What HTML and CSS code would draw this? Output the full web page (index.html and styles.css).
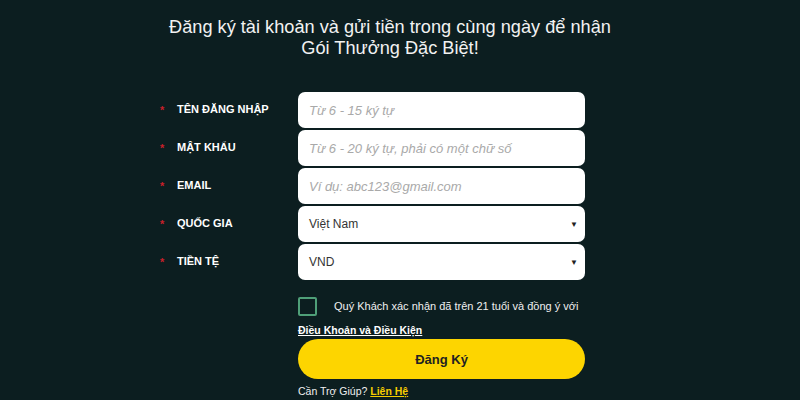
FILE: index.html
```html
<!DOCTYPE html>
<html lang="vi">
<head>
<meta charset="utf-8">
<link rel="stylesheet" href="styles.css">
</head>
<body>
<div class="page">
  <h1 class="title">Đăng ký tài khoản và gửi tiền trong cùng ngày để nhận<br>Gói Thưởng Đặc Biệt!</h1>
  <form class="form">
    <div class="row">
      <label class="label"><span class="star">*</span>TÊN ĐĂNG NHẬP</label>
      <div class="field"><span class="ph">Từ 6 - 15 ký tự</span></div>
    </div>
    <div class="row">
      <label class="label"><span class="star">*</span>MẬT KHẨU</label>
      <div class="field"><span class="ph">Từ 6 - 20 ký tự, phải có một chữ số</span></div>
    </div>
    <div class="row">
      <label class="label"><span class="star">*</span>EMAIL</label>
      <div class="field"><span class="ph">Ví dụ: abc123@gmail.com</span></div>
    </div>
    <div class="row">
      <label class="label"><span class="star">*</span>QUỐC GIA</label>
      <div class="field select"><span class="val">Việt Nam</span><span class="caret">▼</span></div>
    </div>
    <div class="row">
      <label class="label"><span class="star">*</span>TIỀN TỆ</label>
      <div class="field select"><span class="val">VND</span><span class="caret">▼</span></div>
    </div>
    <div class="bottom">
      <div class="agree"><span class="box"></span><span class="agree-text">Quý Khách xác nhận đã trên 21 tuổi và đồng ý với</span></div>
      <a class="terms">Điều Khoản và Điều Kiện</a>
      <button type="button" class="btn">Đăng Ký</button>
      <div class="help">Cần Trợ Giúp? <a class="contact">Liên Hệ</a></div>
    </div>
  </form>
</div>
</body>
</html>
```

FILE: styles.css
```css
* { box-sizing: border-box; }
html, body { margin: 0; padding: 0; }
body {
  background: #0c1e20;
  font-family: "Liberation Sans", Arial, sans-serif;
  color: #fff;
  width: 800px;
  height: 400px;
  overflow: hidden;
}
.page { padding-top: 17px; }
.title {
  margin: 0;
  text-align: center;
  font-weight: normal;
  font-size: 18.2px;
  line-height: 21px;
  color: #f2f2f2;
  padding-right: 20px;
}
.form {
  margin-top: 33px;
  display: flex;
  flex-direction: column;
  gap: 2px;
}
.row {
  display: flex;
  align-items: center;
  height: 36px;
}
.label {
  width: 298px;
  padding-left: 160px;
  font-size: 11px;
  font-weight: bold;
  color: #fff;
  display: flex;
  align-items: center;
  margin-top: -3px;
}
.star {
  color: #c8202a;
  width: 17px;
  font-size: 11px;
  position: relative;
  top: 1px;
}
.field {
  width: 287px;
  height: 36px;
  background: #fff;
  border-radius: 7px;
  display: flex;
  align-items: center;
  padding: 0 11px;
  font-size: 13px;
}
.ph { color: #a9a9a9; font-style: italic; }
.select { justify-content: space-between; padding-right: 7px; }
.val { color: #333; font-size: 12px; }
.caret { color: #222; font-size: 8px; }
.bottom {
  margin-left: 298px;
  width: 287px;
  display: flex;
  flex-direction: column;
  padding-top: 14px;
}
.agree { display: flex; align-items: center; height: 20px; }
.box {
  flex: none;
  width: 19px;
  height: 19px;
  border: 2px solid #4f9f78;
  border-radius: 2px;
}
.agree-text { font-size: 11px; margin-left: 17px; color: #f0f0f0; white-space: nowrap; }
.terms {
  margin-top: 8px;
  font-size: 10.5px;
  font-weight: bold;
  text-decoration: underline;
  color: #fff;
  line-height: 13px;
}
.btn {
  margin-top: 2px;
  height: 40px;
  width: 287px;
  border: none;
  border-radius: 20px;
  background: #fdd500;
  font-family: "Liberation Sans", Arial, sans-serif;
  font-weight: bold;
  font-size: 13px;
  color: #222;
}
.help { margin-top: 6px; font-size: 10.5px; color: #f0f0f0; }
.contact { color: #f5cc00; font-weight: bold; text-decoration: underline; }
```
